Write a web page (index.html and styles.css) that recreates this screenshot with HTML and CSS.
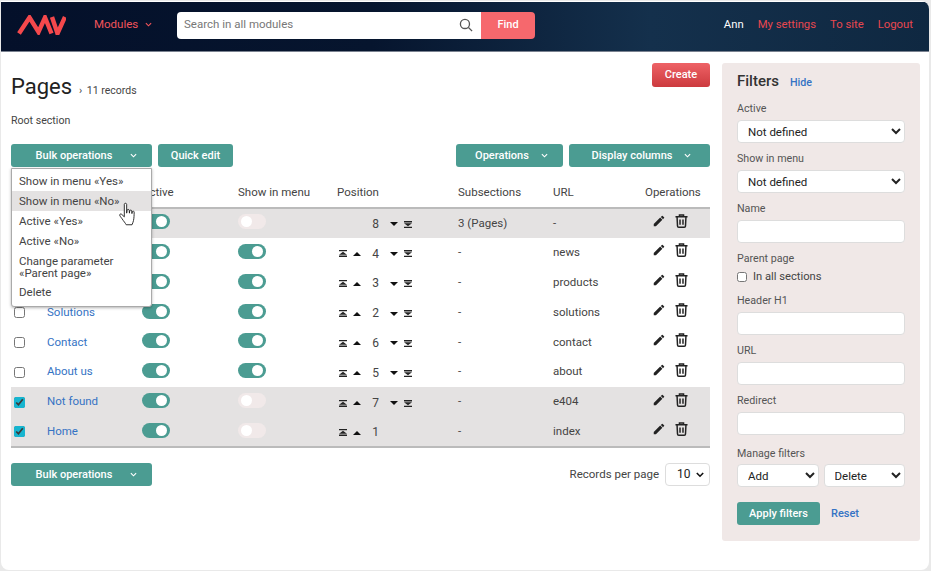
FILE: index.html
```html
<!DOCTYPE html>
<html lang="en">
<head>
<meta charset="utf-8">
<title>Pages</title>
<link rel="stylesheet" href="styles.css">
</head>
<body>
<svg class="defs" width="0" height="0">
  <defs>
    <symbol id="top" viewBox="0 0 8 7"><path d="M0 0h8v1.200H0zM4 1.800l4 3H0zM0 5.500h8v1.500H0z" fill="#222"/></symbol>
    <symbol id="up" viewBox="0 0 8 4"><path d="M4 0l4 4H0z" fill="#111"/></symbol>
    <symbol id="down" viewBox="0 0 8 4"><path d="M0 0h8L4 4z" fill="#111"/></symbol>
    <symbol id="bottom" viewBox="0 0 8 7"><path d="M0 0h8v1.500H0zM0 2.200h8l-4 3zM0 5.800h8V7H0z" fill="#222"/></symbol>
    <symbol id="pen" viewBox="0 0 24 24"><path d="M3 17.250V21h3.750L17.810 9.940l-3.750-3.750L3 17.250zM20.710 7.040a1 1 0 0 0 0-1.410l-2.340-2.340a1 1 0 0 0-1.410 0l-1.830 1.830 3.750 3.750 1.830-1.830z" fill="#222"/></symbol>
    <symbol id="bin" viewBox="0 0 14 15"><path d="M.5 3h13M4.800 3V1h4.400v2M2.200 3l.5 9.800c0 .8.600 1.400 1.400 1.400h5.800c.8 0 1.400-.6 1.400-1.400l.5-9.800M5.400 6v5.500M8.600 6v5.500" fill="none" stroke="#222" stroke-width="1.600"/></symbol>
  </defs>
</svg>
<div class="frame">
  <header class="topbar">
    <svg class="logo" viewBox="0 0 50 20" width="50" height="20"><path d="M3 18.500L13.500 2.500l9 14.500L29 2.500l6.500 16M36 2l5.500 16.500L49 2" fill="none" stroke="#f4484c" stroke-width="4.400"/></svg>
    <a class="modules">Modules <svg class="chev" viewBox="0 0 8 5" width="7" height="5"><path d="M1 1l3 3 3-3" fill="none" stroke="currentColor" stroke-width="1.300"/></svg></a>
    <form class="search">
      <span class="search-box">
        <span class="search-text">Search in all modules</span>
        <svg class="search-icon" viewBox="0 0 16 16" width="14" height="14"><circle cx="6.800" cy="6.800" r="5.200" fill="none" stroke="#555" stroke-width="1.500"/><path d="M10.800 10.800L15 15" stroke="#555" stroke-width="1.500"/></svg>
      </span>
      <span class="find">Find</span>
    </form>
    <nav class="usernav">
      <span class="user">Ann</span><a>My settings</a><a>To site</a><a>Logout</a>
    </nav>
  </header>
  <div class="main">
    <section class="content">
      <div class="titlebar">
        <div class="titles"><h1>Pages</h1><span class="records"><span class="sep">›</span> 11 records</span></div>
        <span class="btn create">Create</span>
      </div>
      <p class="crumb">Root section</p>
      <div class="toolbar">
        <div class="btn-group">
          <span class="btn teal bulk">Bulk operations <svg class="chev" viewBox="0 0 8 5" width="7" height="5"><path d="M1 1l3 3 3-3" fill="none" stroke="currentColor" stroke-width="1.300"/></svg></span>
          <span class="btn teal quick">Quick edit</span>
        </div>
        <div class="btn-group">
          <span class="btn teal ops">Operations <svg class="chev" viewBox="0 0 8 5" width="7" height="5"><path d="M1 1l3 3 3-3" fill="none" stroke="currentColor" stroke-width="1.300"/></svg></span>
          <span class="btn teal cols">Display columns <svg class="chev" viewBox="0 0 8 5" width="7" height="5"><path d="M1 1l3 3 3-3" fill="none" stroke="currentColor" stroke-width="1.300"/></svg></span>
        </div>
      </div>
      <div class="table-wrap">
        <table class="grid">
          <colgroup><col class="c1"><col class="c2"><col class="c3"><col class="c4"><col class="c5"><col class="c6"><col class="c7"><col class="c8"></colgroup>
          <thead>
            <tr><th></th><th>Name</th><th>Active</th><th>Show in menu</th><th>Position</th><th>Subsections</th><th>URL</th><th>Operations</th></tr>
          </thead>
          <tbody>
            <tr class="sel">
              <td><input type="checkbox" checked></td><td><a>Catalog</a></td>
              <td><span class="tog on"></span></td><td><span class="tog off"></span></td>
              <td><div class="pos"><i></i><i></i><b>8</b><svg class="up" viewBox="0 0 8 4"><use href="#down"/></svg><svg class="tb" viewBox="0 0 8 7"><use href="#bottom"/></svg></div></td>
              <td>3 (Pages)</td><td>-</td>
              <td><div class="acts"><svg class="pen"><use href="#pen"/></svg><svg class="bin"><use href="#bin"/></svg></div></td>
            </tr>
            <tr>
              <td><input type="checkbox"></td><td><a>News</a></td>
              <td><span class="tog on"></span></td><td><span class="tog on"></span></td>
              <td><div class="pos"><svg class="tb" viewBox="0 0 8 7"><use href="#top"/></svg><svg class="up" viewBox="0 0 8 4"><use href="#up"/></svg><b>4</b><svg class="up" viewBox="0 0 8 4"><use href="#down"/></svg><svg class="tb" viewBox="0 0 8 7"><use href="#bottom"/></svg></div></td>
              <td>-</td><td>news</td>
              <td><div class="acts"><svg class="pen"><use href="#pen"/></svg><svg class="bin"><use href="#bin"/></svg></div></td>
            </tr>
            <tr>
              <td><input type="checkbox"></td><td><a>Products</a></td>
              <td><span class="tog on"></span></td><td><span class="tog on"></span></td>
              <td><div class="pos"><svg class="tb" viewBox="0 0 8 7"><use href="#top"/></svg><svg class="up" viewBox="0 0 8 4"><use href="#up"/></svg><b>3</b><svg class="up" viewBox="0 0 8 4"><use href="#down"/></svg><svg class="tb" viewBox="0 0 8 7"><use href="#bottom"/></svg></div></td>
              <td>-</td><td>products</td>
              <td><div class="acts"><svg class="pen"><use href="#pen"/></svg><svg class="bin"><use href="#bin"/></svg></div></td>
            </tr>
            <tr>
              <td><input type="checkbox"></td><td><a>Solutions</a></td>
              <td><span class="tog on"></span></td><td><span class="tog on"></span></td>
              <td><div class="pos"><svg class="tb" viewBox="0 0 8 7"><use href="#top"/></svg><svg class="up" viewBox="0 0 8 4"><use href="#up"/></svg><b>2</b><svg class="up" viewBox="0 0 8 4"><use href="#down"/></svg><svg class="tb" viewBox="0 0 8 7"><use href="#bottom"/></svg></div></td>
              <td>-</td><td>solutions</td>
              <td><div class="acts"><svg class="pen"><use href="#pen"/></svg><svg class="bin"><use href="#bin"/></svg></div></td>
            </tr>
            <tr>
              <td><input type="checkbox"></td><td><a>Contact</a></td>
              <td><span class="tog on"></span></td><td><span class="tog on"></span></td>
              <td><div class="pos"><svg class="tb" viewBox="0 0 8 7"><use href="#top"/></svg><svg class="up" viewBox="0 0 8 4"><use href="#up"/></svg><b>6</b><svg class="up" viewBox="0 0 8 4"><use href="#down"/></svg><svg class="tb" viewBox="0 0 8 7"><use href="#bottom"/></svg></div></td>
              <td>-</td><td>contact</td>
              <td><div class="acts"><svg class="pen"><use href="#pen"/></svg><svg class="bin"><use href="#bin"/></svg></div></td>
            </tr>
            <tr>
              <td><input type="checkbox"></td><td><a>About us</a></td>
              <td><span class="tog on"></span></td><td><span class="tog on"></span></td>
              <td><div class="pos"><svg class="tb" viewBox="0 0 8 7"><use href="#top"/></svg><svg class="up" viewBox="0 0 8 4"><use href="#up"/></svg><b>5</b><svg class="up" viewBox="0 0 8 4"><use href="#down"/></svg><svg class="tb" viewBox="0 0 8 7"><use href="#bottom"/></svg></div></td>
              <td>-</td><td>about</td>
              <td><div class="acts"><svg class="pen"><use href="#pen"/></svg><svg class="bin"><use href="#bin"/></svg></div></td>
            </tr>
            <tr class="sel">
              <td><input type="checkbox" checked></td><td><a>Not found</a></td>
              <td><span class="tog on"></span></td><td><span class="tog off"></span></td>
              <td><div class="pos"><svg class="tb" viewBox="0 0 8 7"><use href="#top"/></svg><svg class="up" viewBox="0 0 8 4"><use href="#up"/></svg><b>7</b><svg class="up" viewBox="0 0 8 4"><use href="#down"/></svg><svg class="tb" viewBox="0 0 8 7"><use href="#bottom"/></svg></div></td>
              <td>-</td><td>e404</td>
              <td><div class="acts"><svg class="pen"><use href="#pen"/></svg><svg class="bin"><use href="#bin"/></svg></div></td>
            </tr>
            <tr class="sel">
              <td><input type="checkbox" checked></td><td><a>Home</a></td>
              <td><span class="tog on"></span></td><td><span class="tog off"></span></td>
              <td><div class="pos"><svg class="tb" viewBox="0 0 8 7"><use href="#top"/></svg><svg class="up" viewBox="0 0 8 4"><use href="#up"/></svg><b>1</b><i></i><i></i></div></td>
              <td>-</td><td>index</td>
              <td><div class="acts"><svg class="pen"><use href="#pen"/></svg><svg class="bin"><use href="#bin"/></svg></div></td>
            </tr>
          </tbody>
        </table>
        <ul class="menu">
          <li>Show in menu «Yes»</li>
          <li class="hover">Show in menu «No»</li>
          <li>Active «Yes»</li>
          <li>Active «No»</li>
          <li>Change parameter<br>«Parent page»</li>
          <li>Delete</li>
        </ul>
        <svg class="hand" viewBox="0 0 22 28" width="21" height="26"><path d="M6.500 2.500c0-1.500 2.500-1.500 2.500 0V12l.5-3c0-1.300 2.300-1.300 2.300 0l.2 3 .3-2.500c.2-1.200 2.200-1 2.200.2l.2 2.800.4-2c.2-1 2-.8 2 .4 0 3-.2 7-.7 9-.3 1.500-1 3-1.600 4.600H8.500c-1-2-2.500-3.500-4.500-6.500-1-1.500-2.500-3-2.500-4 0-1 1.200-1.500 2.200-.7l2.800 2.700z" fill="#fff" stroke="#222" stroke-width="1"/></svg>
      </div>
      <div class="footbar">
        <span class="btn teal bulk">Bulk operations <svg class="chev" viewBox="0 0 8 5" width="7" height="5"><path d="M1 1l3 3 3-3" fill="none" stroke="currentColor" stroke-width="1.300"/></svg></span>
        <label class="perpage">Records per page <span class="small-wrap"><select class="sel-small"><option>10</option></select><svg class="small-arrow" viewBox="0 0 10 7" width="8" height="6"><path d="M1 1l4 4 4-4" fill="none" stroke="#111" stroke-width="2"/></svg></span></label>
      </div>
    </section>
    <aside class="filters">
      <div class="filters-head"><h2>Filters</h2><a>Hide</a></div>
      <label class="f">Active<select><option>Not defined</option></select></label>
      <label class="f">Show in menu<select><option>Not defined</option></select></label>
      <label class="f">Name<input type="text"></label>
      <div class="f parent">Parent page<label class="cb"><input type="checkbox"> In all sections</label></div>
      <label class="f">Header H1<input type="text"></label>
      <label class="f">URL<input type="text"></label>
      <label class="f">Redirect<input type="text"></label>
      <div class="f manage">Manage filters
        <div class="two"><select><option>Add</option></select><select><option>Delete</option></select></div>
      </div>
      <div class="apply"><span class="btn teal applybtn">Apply filters</span><a>Reset</a></div>
    </aside>
  </div>
</div>
</body>
</html>
```
FILE: styles.css
```css
* { box-sizing: border-box; }
html, body { margin: 0; height: 100%; }
body { background: #e9e9e9; font: 11.500px/1.2 Roboto, "Liberation Sans", sans-serif; color: #333; padding: 1px 1px 0 1px; }
.defs { position: absolute; }
.frame { background: #fff; height: 569px; width: 928px; border-radius: 0 8px 8px 8px; overflow: hidden; }
a { color: #3573c4; text-decoration: none; }

.topbar { height: 50px; margin-top: 1px; display: flex; align-items: center; background: linear-gradient(90deg, #04102a 0%, #06152e 40%, #14304c 70%, #0f2841 100%); border-bottom: 1px solid #7a8290; padding: 0 0 3px 15px; }
.logo { display: block; flex: none; }
.modules { color: #f2545a; margin-left: 28px; width: 83px; display: flex; align-items: center; gap: 7px; }
.chev { display: block; flex: none; }
.search { display: flex; height: 27px; width: 358px; }
.search-box { flex: 1; background: #fff; border-radius: 4px 0 0 4px; display: flex; align-items: center; justify-content: space-between; padding: 0 8px 0 7px; color: #777; }
.find { width: 54px; background: #f6686d; color: #fff; border-radius: 0 4px 4px 0; display: flex; align-items: center; justify-content: center; font-weight: 500; font-size: 11px; }
.usernav { margin-left: auto; display: flex; gap: 14px; padding-right: 16px; font-size: 11.300px; }
.usernav a { color: #e8474f; }
.user { color: #fff; }

.main { display: flex; padding: 11px 10px 0 10px; gap: 12px; align-items: flex-start; }
.content { width: 699px; flex: none; }
.titlebar { display: flex; justify-content: space-between; align-items: flex-start; height: 50px; }
.titles { display: flex; align-items: baseline; padding-top: 10px; }
h1 { margin: 0; font-size: 22px; font-weight: 400; color: #222; line-height: 28px; }
.records { margin-left: 7px; font-size: 10.500px; color: #444; }
.sep { margin-right: 2px; }
.btn { display: inline-flex; align-items: center; justify-content: center; height: 23px; border-radius: 3px; color: #fff; font-weight: 500; font-size: 11px; white-space: nowrap; }
.create { width: 58px; height: 24px; background: linear-gradient(#ee6266, #cc3a3e); }
.teal { background: #4b9c92; }
.crumb { margin: 0; height: 31px; padding-top: 1px; font-size: 10.600px; line-height: 14px; color: #444; }
.toolbar { display: flex; justify-content: space-between; height: 23px; }
.btn-group { display: flex; gap: 6px; }
.bulk { width: 141px; gap: 18px; padding-left: 10px; }
.quick { width: 75px; }
.ops { width: 107px; gap: 12px; padding-left: 4px; }
.cols { width: 141px; gap: 12px; padding-left: 4px; }

.table-wrap { position: relative; margin-top: 15px; }
.grid { width: 699px; border-collapse: collapse; table-layout: fixed; border-bottom: 2px solid #bbb; }
.c1 { width: 36px; } .c2 { width: 95px; } .c3 { width: 96px; } .c4 { width: 99px; } .c5 { width: 121px; } .c6 { width: 95px; } .c7 { width: 92px; } .c8 { width: 65px; }
th { height: 26px; padding: 0 0 4px; font-weight: 400; text-align: left; color: #444; border-bottom: 2px solid #bbb; }
td { height: 29.875px; padding: 0; color: #444; }
td:first-child { padding-left: 3px; }
tr.sel td { background: #e4e2e2; }
td input[type=checkbox] { display: block; margin: 0; width: 11px; height: 11px; accent-color: #16b5d0; }
.tog { display: block; width: 28px; height: 15px; border-radius: 8px; position: relative; margin-top: -3px; }
.tog::after { content: ""; position: absolute; top: 2px; width: 11px; height: 11px; border-radius: 50%; background: #fff; }
.tog.on { background: #4b9c92; }
.tog.on::after { right: 3px; }
.tog.off { background: #f1e9e9; }
.tog.off::after { left: 3px; }
.pos { display: grid; grid-template-columns: 8px 8px 17px 8px 8px; column-gap: 6px; width: 75px; margin: 2px 0 0 2px; align-items: center; justify-items: center; }
.pos b { font-weight: 400; font-size: 12px; color: #444; }
.pos i { display: block; }
.tb { width: 8px; height: 7px; display: block; }
.up { width: 8px; height: 4px; display: block; }
.acts { display: flex; align-items: center; gap: 9px; margin: -5px 0 0 7px; }
.pen { width: 14px; height: 14px; display: block; }
.bin { width: 13px; height: 14px; display: block; }

.menu { position: absolute; left: 0; top: -14px; width: 141px; margin: 0; padding: 2px 0 4px; list-style: none; background: #fff; border: 1px solid #aaa; border-radius: 0 0 3px 3px; box-shadow: 0 1px 3px rgba(0,0,0,.3); }
.menu li { padding: 3.500px 7px; line-height: 13px; color: #444; }
.menu li:nth-child(5) { line-height: 12px; }
.menu li.hover { background: #e4e2e2; }
.hand { position: absolute; left: 107px; top: 20px; }

.footbar { display: flex; justify-content: space-between; align-items: center; margin-top: 15px; }
.perpage { display: flex; align-items: center; gap: 6px; color: #444; }
select { font: inherit; color: #222; background: #fff; border: 1px solid #ddd; border-radius: 4px; height: 23px; padding: 0 6px; }
.small-wrap { position: relative; display: block; }
.sel-small { display: block; width: 45px; appearance: none; padding: 0 0 0 11px; font-size: 12px; }
.small-arrow { position: absolute; right: 6px; top: 9px; pointer-events: none; }

.filters { width: 198px; height: 478px; background: #f0e8e7; border-radius: 3px; padding: 9px 15px; flex: none; }
.filters-head { display: flex; align-items: baseline; gap: 11px; height: 29px; }
h2 { margin: 0; font-size: 15px; font-weight: 500; color: #333; }
.filters-head a { font-size: 10.700px; font-weight: 500; }
.f { display: block; font-size: 10.700px; color: #555; height: 50px; padding-top: 1px; line-height: 14px; }
.f select, .f input[type=text] { display: block; width: 168px; height: 23px; margin-top: 4px; font-size: 11.500px; padding: 0 6px; border: 1px solid #ddd; border-radius: 4px; background: #fff; }
.parent { height: 42px; }
.cb { display: flex; align-items: center; gap: 6px; margin-top: 4px; font-size: 11.200px; color: #444; }
.cb input { margin: 0; width: 10px; height: 10px; }
.manage { margin-top: 3px; height: 56px; }
.two { display: flex; gap: 5px; margin-top: -1px; }
.f .two select { width: 81.500px; }
.apply { display: flex; align-items: center; gap: 11px; }
.applybtn { width: 83px; }
.apply a { font-size: 11px; font-weight: 500; }
```
